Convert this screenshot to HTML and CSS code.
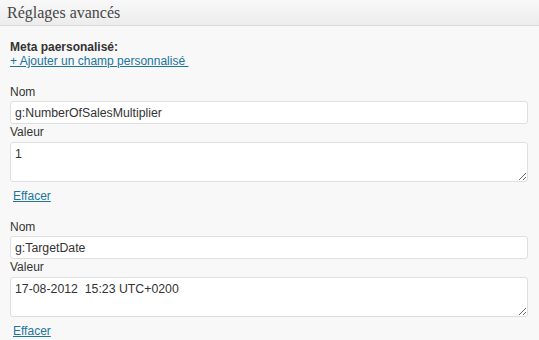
FILE: index.html
```html
<!DOCTYPE html>
<html>
<head>
<meta charset="utf-8">
<link rel="stylesheet" href="styles.css">
</head>
<body>
<div class="box">
  <h3 class="hndl">Réglages avancés</h3>
  <div class="inside">
    <div class="meta">
      <strong>Meta paersonalisé:</strong>
      <a href="#" class="add">+ Ajouter un champ personnalisé&nbsp;</a>
    </div>
    <div class="field">
      <label class="lbl">Nom</label>
      <input class="txt" type="text" value="g:NumberOfSalesMultiplier">
      <label class="lbl">Valeur</label>
      <textarea class="area">1</textarea>
      <a href="#" class="del">Effacer</a>
    </div>
    <div class="field">
      <label class="lbl">Nom</label>
      <input class="txt" type="text" value="g:TargetDate">
      <label class="lbl">Valeur</label>
      <textarea class="area">17-08-2012  15:23 UTC+0200</textarea>
      <a href="#" class="del">Effacer</a>
    </div>
  </div>
</div>
</body>
</html>
```
FILE: styles.css
```css
html, body {
  margin: 0;
  padding: 0;
  background: #f8f8f8;
}
body {
  font-family: "Liberation Sans", Arial, sans-serif;
  font-size: 12px;
  color: #333;
  width: 539px;
  height: 340px;
  overflow: hidden;
}
.hndl {
  margin: 0;
  height: 26px;
  box-sizing: border-box;
  padding: 3px 0 0 7px;
  font-family: "Liberation Serif", Georgia, serif;
  font-weight: normal;
  font-size: 16px;
  line-height: 20px;
  color: #464646;
  background: linear-gradient(to bottom, #f9f9f9, #ececec);
  border-bottom: 1px solid #dcdcdc;
}
.inside {
  padding: 14px 11px 0 10px;
}
.meta {
  display: flex;
  flex-direction: column;
  align-items: flex-start;
  line-height: 14px;
}
.meta strong {
  font-weight: bold;
  color: #333;
}
.add {
  color: #21759b;
  text-decoration: underline;
}
.field {
  display: flex;
  flex-direction: column;
  align-items: stretch;
  margin-top: 16px;
}
.field + .field {
  margin-top: 15px;
}
.lbl {
  line-height: 16px;
  color: #333;
}
.txt, .area {
  box-sizing: border-box;
  width: 100%;
  background: #fff;
  border: 1px solid #dfdfdf;
  border-radius: 3px;
  font-family: "Liberation Sans", Arial, sans-serif;
  font-size: 12.3px;
  color: #333;
  margin: 1px 0 0 0;
  outline: none;
}
.txt {
  height: 23px;
  padding: 0 4px;
}
.area {
  height: 40px;
  margin-top: 2px;
  padding: 3px 4px;
  resize: vertical;
  line-height: 16px;
}
.del {
  align-self: flex-start;
  margin: 6px 0 0 3px;
  line-height: 16px;
  color: #21759b;
  text-decoration: underline;
}
```
